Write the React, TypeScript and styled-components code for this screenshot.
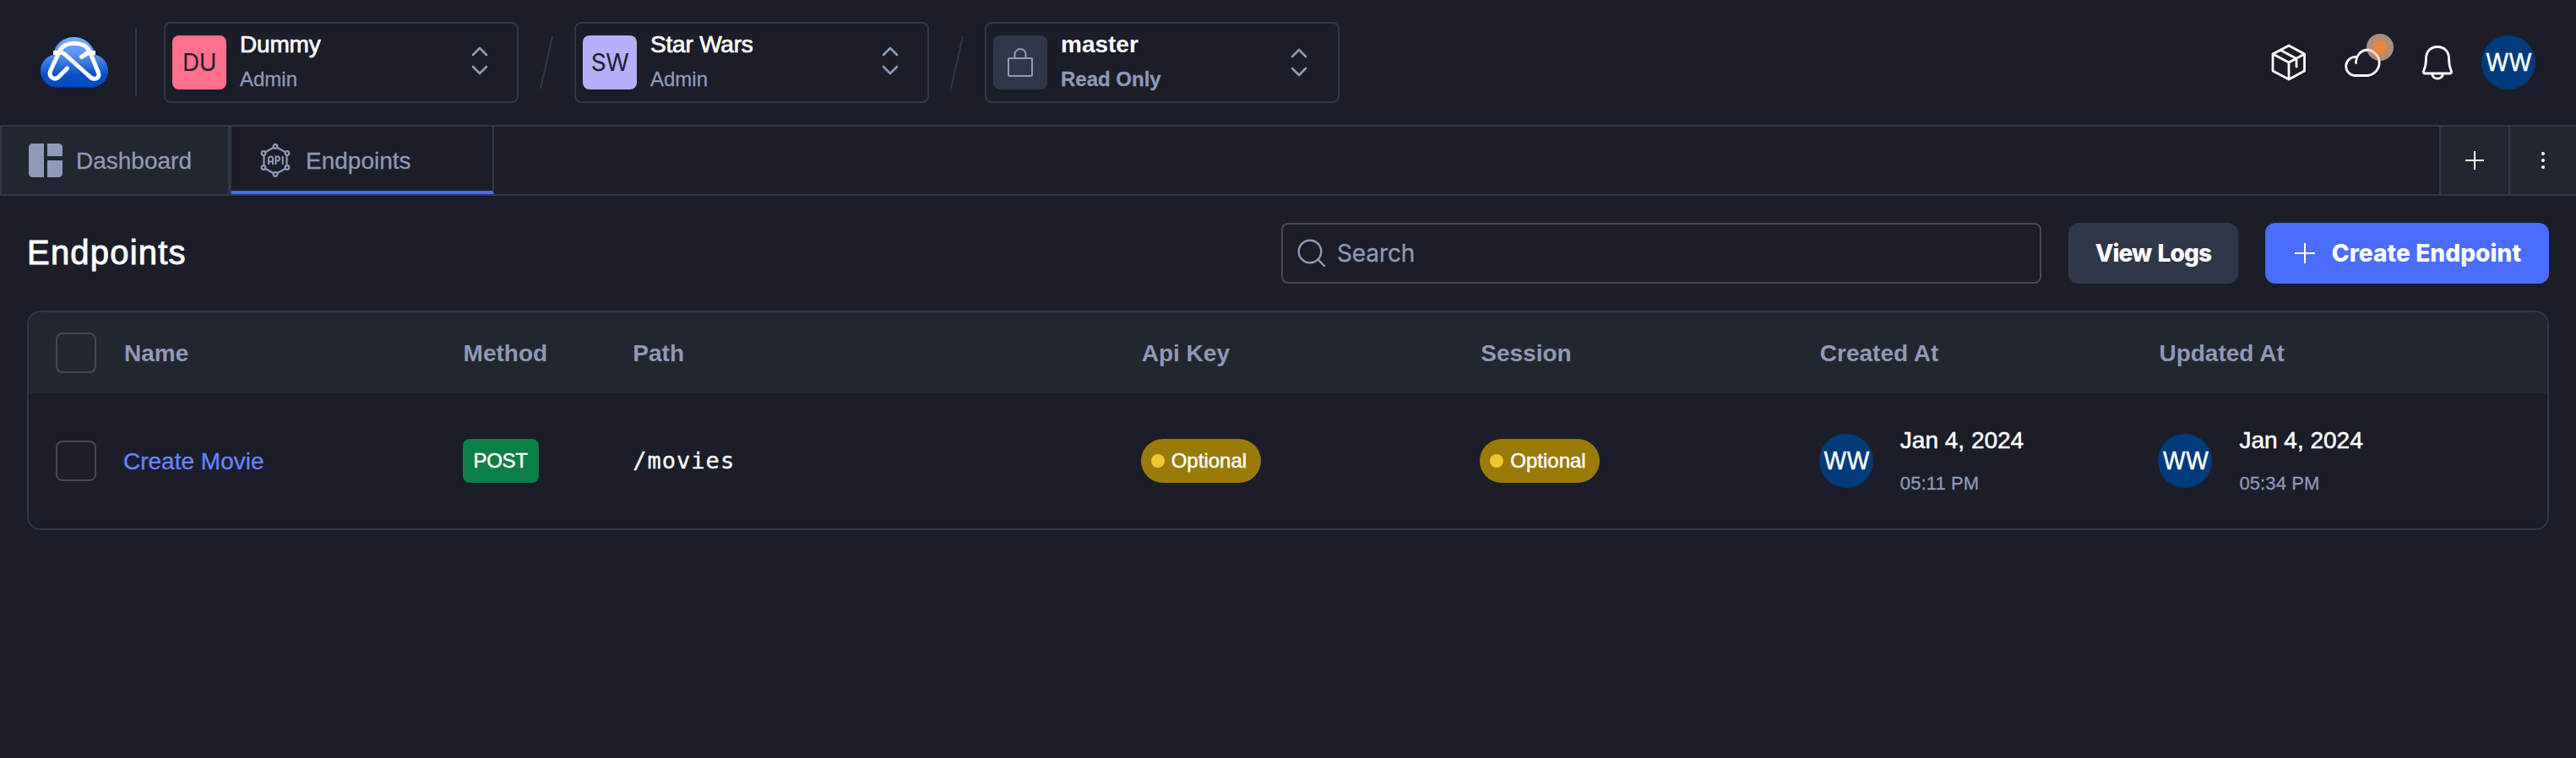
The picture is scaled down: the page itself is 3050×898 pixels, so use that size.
import React from "react";
import styled, { createGlobalStyle } from "styled-components";

const c = {
  bg: "#1b1d29", panel: "#22262f", line: "#31374a", muted: "#8f99b8", white: "#ffffff",
  blue: "#4a6dff", link: "#6684ff", navy: "#003b7c", field: "#48484f",
};
const sans = `"Liberation Sans", Arial, sans-serif`;
const inter = `Inter, "Liberation Sans", sans-serif`;

const Global = createGlobalStyle`
  * { box-sizing: border-box; }
  body { margin: 0; background: ${c.bg}; color: ${c.white}; font-family: ${sans}; }
  svg { display: block; flex: none; }
`;

const Page = styled.div`height: 898px; overflow: hidden; background: ${c.bg};`;
const Header = styled.header`
  height: 150px; display: flex; align-items: center; border-bottom: 2px solid ${c.line}; padding: 0 48px;
`;
const Divider = styled.div`width: 2px; height: 80px; margin: 0 32px; background: ${c.line};`;
const Picker = styled.button`
  width: 420px; height: 96px; flex: none; display: flex; align-items: center; padding: 0 36px 0 8px;
  background: none; border: 2px solid ${c.line}; border-radius: 8px; font: inherit; color: inherit; text-align: left;
`;
const Tile = styled.span<{ $bg: string }>`
  width: 64px; height: 64px; border-radius: 8px; background: ${(p) => p.$bg}; color: ${c.bg};
  display: flex; align-items: center; justify-content: center; font: 400 28px ${inter}; letter-spacing: -0.5px;
`;
const PickerText = styled.span<{ $bold?: boolean }>`
  flex: 1; margin-left: 16px; padding-bottom: 4px; display: flex; flex-direction: column;
  font-weight: ${(p) => (p.$bold ? 700 : 400)};
`;
const PickerTitle = styled.span<{ $bold?: boolean }>`
  font-size: 28px; line-height: 42px; -webkit-text-stroke: ${(p) => (p.$bold ? 0 : 0.7)}px ${c.white};
  letter-spacing: ${(p) => (p.$bold ? 0 : -0.2)}px;
`;
const PickerRole = styled.span`
  font-size: 24px; line-height: 36px; margin-top: 2px; color: ${c.muted}; -webkit-text-stroke: 0.3px ${c.muted};
`;
const Chevrons = styled.svg<{ $low?: boolean }>`
  width: 20px; height: 36px; margin-top: ${(p) => (p.$low ? 0 : -4)}px;
  margin-right: ${(p) => (p.$low ? 0 : -2)}px;
`;
const Slash = styled.svg`width: 16px; height: 66px; margin: 0 25px;`;
const Actions = styled.div`margin-left: auto; display: flex; align-items: center;`;
const ActionIcons = styled.div`display: flex; align-items: center; margin-right: 8px;`;
const ActionIcon = styled.div`position: relative; width: 88px; display: flex; justify-content: center;`;
const Pulse = styled.span`
  position: absolute; top: -17px; right: 8px; width: 32px; height: 32px; border-radius: 50%;
  background: rgba(255, 202, 168, 0.65); display: flex; align-items: center; justify-content: center;
  &::after { content: ""; width: 16px; height: 16px; border-radius: 50%; background: #ef8437; }
`;
const Avatar = styled.span`
  width: 64px; height: 64px; flex: none; border-radius: 50%; background: ${c.navy}; color: ${c.white};
  display: flex; align-items: center; justify-content: center; font: 400 28px ${inter}; letter-spacing: -1px;
  -webkit-text-stroke: 0.4px ${c.white};
`;

const TabBar = styled.nav`height: 82px; display: flex; border-bottom: 2px solid ${c.line}; border-left: 2px solid ${c.line};`;
const Tab = styled.div<{ $w: number; $active?: boolean }>`
  width: ${(p) => p.$w}px; display: flex; align-items: center; gap: 16px; padding-left: 32px; padding-top: ${(p) => (p.$active ? 4 : 0)}px;
  font-size: 28px; line-height: 38px; color: ${c.muted}; -webkit-text-stroke: 0.3px ${c.muted};
  background: ${(p) => (p.$active ? c.bg : c.panel)};
  border-right: ${(p) => (p.$active ? 2 : 4)}px solid ${c.line};
  border-bottom: ${(p) => (p.$active ? 4 : 0)}px solid ${c.blue};
`;
const TabLabel = styled.span`padding-top: 2px;`;
const TabSpace = styled.div`flex: 1;`;
const TabButton = styled.div<{ $w: number }>`
  width: ${(p) => p.$w}px; display: flex; align-items: center; justify-content: center;
  background: ${c.panel}; border-left: 2px solid ${c.line};
`;

const Main = styled.main`padding: 32px;`;
const Toolbar = styled.div`display: flex; align-items: center; gap: 32px; height: 72px; margin-bottom: 32px;`;
const Title = styled.h1`
  flex: 1; margin: 0; font-size: 40px; line-height: 56px; font-weight: 400; letter-spacing: 1.2px;
  -webkit-text-stroke: 0.9px ${c.white}; padding-bottom: 2px;
`;
const Search = styled.div`
  width: 900px; height: 72px; display: flex; align-items: center; gap: 13px; padding-left: 17px;
  border: 2px solid ${c.field}; border-radius: 8px; color: ${c.muted}; font: 400 28px ${inter}; letter-spacing: -0.1px;
  -webkit-text-stroke: 0.3px ${c.muted};
`;
const Button = styled.button<{ $w: number; $primary?: boolean }>`
  width: ${(p) => p.$w}px; height: 72px; display: flex; align-items: center; justify-content: center; gap: 20px;
  padding: 0 0 0 ${(p) => (p.$primary ? 2 : 0)}px;
  border: 0; border-radius: 12px; background: ${(p) => (p.$primary ? c.blue : c.line)}; color: ${c.white};
  font: 800 28px ${inter}; letter-spacing: ${(p) => (p.$primary ? 0.1 : -0.9)}px; word-spacing: ${(p) => (p.$primary ? 0 : 2)}px;
  white-space: nowrap;
`;

const Table = styled.section`border: 2px solid ${c.line}; border-radius: 16px; overflow: hidden;`;
const Row = styled.div<{ $head?: boolean }>`
  height: ${(p) => (p.$head ? 96 : 160)}px; background: ${(p) => (p.$head ? c.panel : c.bg)};
  display: grid; grid-template-columns: 80px 2fr 1fr 3fr 2fr 2fr 2fr 2fr; align-items: center; padding: 0 59px 0 32px;
  font-size: 28px; line-height: 40px; font-weight: ${(p) => (p.$head ? 700 : 400)};
  color: ${(p) => (p.$head ? c.muted : c.white)};
`;
const Check = styled.span`width: 48px; height: 48px; border: 2px solid ${c.field}; border-radius: 8px;`;
const HeadCell = styled.span`padding: 2px 0 0 1px;`;
const Link = styled.a`color: ${c.link}; padding-top: 2px; -webkit-text-stroke: 0.3px ${c.link};`;
const Path = styled.span`
  font-family: "DejaVu Sans Mono", monospace; font-size: 27px; letter-spacing: 1px; padding-left: 1px;
  -webkit-text-stroke: 0.3px ${c.white};
`;
const Method = styled.span`
  width: 90px; height: 52px; border-radius: 8px; background: #0d7f48; font-size: 24px; line-height: 52px; text-align: center;
  letter-spacing: -0.3px; -webkit-text-stroke: 0.5px ${c.white};
`;
const Pill = styled.span`
  width: 142px; height: 52px; border-radius: 26px; background: #9a7a09; display: flex; align-items: center; gap: 8px;
  padding-left: 12px; font-size: 24px; -webkit-text-stroke: 0.5px ${c.white};
  &::before { content: ""; width: 16px; height: 16px; border-radius: 50%; background: #efc732; }
`;
const Stamp = styled.div`display: flex; align-items: center; gap: 32px;`;
const StampText = styled.div`display: flex; flex-direction: column; gap: 8px; padding-top: 4px;`;
const StampDate = styled.span`font-size: 28px; line-height: 42px; -webkit-text-stroke: 0.5px ${c.white};`;
const StampTime = styled.span`
  font-size: 22px; line-height: 44px; color: ${c.muted}; letter-spacing: 0.1px; -webkit-text-stroke: 0.3px ${c.muted};
`;

const Logo = () => (
  <svg width="80" height="60" viewBox="0 0 80 60" fill="none">
    <defs>
      <linearGradient id="cloud" x1="0" y1="0" x2="0" y2="60" gradientUnits="userSpaceOnUse">
        <stop offset="0" stopColor="#79acff" /><stop offset="0.35" stopColor="#5a90f0" />
        <stop offset="0.75" stopColor="#064fc9" /><stop offset="1" stopColor="#004ac6" />
      </linearGradient>
    </defs>
    <path d="M15 21C17 8 27 0 39.500 0S62 8 65 21C74 23 80 31 80 40C80 51 71 59.500 60 59.500H20C9 59.500 0 51 0 40C0 31 6 23 15 21Z" fill="url(#cloud)" />
    <path d="M15 18.500H25Q27 18.500 29 20.500L58 46.500" stroke="#fff" strokeWidth="5" />
    <path d="M65 18.500H58Q55 18.500 53 20" stroke="#fff" strokeWidth="5" />
    <path d="M31.500 37L21 47.500C16 51.500 9.500 47 11.500 40.500L22.500 16.500C28 4 52 4 58 16.500L68.500 42C71 50 62.500 51.500 57.500 46M55 19.500L48.500 23.500" stroke="#fff" strokeWidth="5" strokeLinecap="round" strokeLinejoin="round" />
  </svg>
);
const UpDown = ({ low }: { low?: boolean }) => (
  <Chevrons $low={low} viewBox="0 0 20 36" fill="none" stroke={c.muted} strokeWidth="2.600" strokeLinecap="round" strokeLinejoin="round">
    <path d="M2 11l8-8 8 8M2 25l8 8 8-8" />
  </Chevrons>
);
const Separator = () => (
  <Slash viewBox="0 0 16 66" stroke={c.line} strokeWidth="2"><path d="M1 64L15 2" /></Slash>
);
const Lock = () => (
  <svg width="32" height="36" viewBox="0 0 32 36" fill="none" stroke={c.muted} strokeWidth="2">
    <rect x="2" y="13" width="28" height="21" rx="1" /><path d="M9.500 13V8.500a6.500 6.500 0 0 1 13 0V13" />
  </svg>
);
const Box = () => (
  <svg width="42" height="44" viewBox="0 0 42 44" fill="none" stroke="#fff" strokeWidth="2.800" strokeLinejoin="round" strokeLinecap="round">
    <path d="M21 2L39.500 12V32L21 42L2 32V12ZM2 12L21 22L39.500 12M21 22V42M11.500 7.500L30 17.500V27" />
  </svg>
);
const Cloud = () => (
  <svg width="46" height="34" viewBox="0 0 46 34" fill="none" stroke="#fff" strokeWidth="2.800" strokeLinecap="round">
    <path d="M14.500 17.500C14.500 9 20 2 29 2A16 15.500 0 0 1 29 32.500H12.500A11 11 0 1 1 15 10.500" />
  </svg>
);
const Bell = () => (
  <svg width="38" height="42" viewBox="0 0 38 42" fill="none" stroke="#fff" strokeWidth="2.800" strokeLinejoin="round">
    <path d="M19 2.500C10 2.500 5.500 9 5.500 16C5.500 25 4 28 2.500 31.500Q2 34 4 34H34Q36 34 35.500 31.500C34 28 32.500 25 32.500 16C32.500 9 28 2.500 19 2.500ZM12.500 34.500C13.500 42 24.500 42 25.500 34.500" />
  </svg>
);
const Dashboard = () => (
  <svg width="40" height="40" viewBox="0 0 40 40" fill={c.muted}>
    <path d="M5 0H18V40H5Q0 40 0 35V5Q0 0 5 0ZM22 0H35Q40 0 40 5V15H22ZM22 20H40V35Q40 40 35 40H22Z" />
  </svg>
);
const nodes = [[20, 3.5], [34, 11.5], [34, 28.5], [20, 36.5], [6, 28.5], [6, 11.5]];
const Api = () => (
  <svg width="40" height="40" viewBox="0 0 40 40" fill="none" stroke={c.muted} strokeWidth="2.200">
    <path d="M22.500 5L31.500 10M33.500 14.500V25.500M31.500 30L22.500 35M17.500 35L8.500 30M6.500 25.500V14.500M8.500 10L17.500 5" />
    {nodes.map(([x, y]) => <circle key={`${x}-${y}`} cx={x} cy={y} r="2.300" />)}
    <path strokeWidth="2" d="M12 25V18Q12 15.500 14.500 15.500T17 18V25M12 21.500H17M20.500 25V15.500H23Q25 15.500 25 18T23 20.500H20.500M28.700 15V25" />
  </svg>
);
const Plus = ({ size, w }: { size: number; w: number }) => (
  <svg width={size} height={size} viewBox={`0 0 ${size} ${size}`} stroke="#fff" strokeWidth={w}>
    <path d={`M0 ${size / 2}H${size}M${size / 2} 0V${size}`} />
  </svg>
);
const Dots = () => (
  <svg width="4" height="20" viewBox="0 0 4 20" fill="#fff"><circle cx="2" cy="2" r="2" /><circle cx="2" cy="10" r="2" /><circle cx="2" cy="18" r="2" /></svg>
);
const Glass = () => (
  <svg width="34" height="34" viewBox="0 0 34 34" fill="none" stroke={c.muted} strokeWidth="2.400" strokeLinecap="round">
    <circle cx="15" cy="15" r="13.300" /><path d="M24.500 24.500L32 32" />
  </svg>
);

const When = ({ time }: { time: string }) => (
  <Stamp><Avatar>WW</Avatar><StampText><StampDate>Jan 4, 2024</StampDate><StampTime>{time}</StampTime></StampText></Stamp>
);

const columns = ["Name", "Method", "Path", "Api Key", "Session", "Created At", "Updated At"];

export default function App() {
  return (
    <Page>
      <Global />
      <Header>
        <Logo />
        <Divider />
        <Picker>
          <Tile $bg="#ff708e">DU</Tile>
          <PickerText><PickerTitle>Dummy</PickerTitle><PickerRole>Admin</PickerRole></PickerText>
          <UpDown />
        </Picker>
        <Separator />
        <Picker>
          <Tile $bg="#b6affa">SW</Tile>
          <PickerText><PickerTitle>Star Wars</PickerTitle><PickerRole>Admin</PickerRole></PickerText>
          <UpDown />
        </Picker>
        <Separator />
        <Picker>
          <Tile $bg={c.line}><Lock /></Tile>
          <PickerText $bold><PickerTitle $bold>master</PickerTitle><PickerRole>Read Only</PickerRole></PickerText>
          <UpDown low />
        </Picker>
        <Actions>
          <ActionIcons>
            <ActionIcon><Box /></ActionIcon>
            <ActionIcon><Cloud /><Pulse /></ActionIcon>
            <ActionIcon><Bell /></ActionIcon>
          </ActionIcons>
          <Avatar>WW</Avatar>
        </Actions>
      </Header>
      <TabBar>
        <Tab $w={272}><Dashboard /><TabLabel>Dashboard</TabLabel></Tab>
        <Tab $w={311} $active><Api /><TabLabel>Endpoints</TabLabel></Tab>
        <TabSpace />
        <TabButton $w={82}><Plus size={22} w={2} /></TabButton>
        <TabButton $w={80}><Dots /></TabButton>
      </TabBar>
      <Main>
        <Toolbar>
          <Title>Endpoints</Title>
          <Search><Glass />Search</Search>
          <Button $w={201}>View Logs</Button>
          <Button $w={336} $primary><Plus size={24} w={2} />Create Endpoint</Button>
        </Toolbar>
        <Table>
          <Row $head>
            <Check />
            {columns.map((name) => <HeadCell key={name}>{name}</HeadCell>)}
          </Row>
          <Row>
            <Check />
            <Link>Create Movie</Link>
            <Method>POST</Method>
            <Path>/movies</Path>
            <Pill>Optional</Pill>
            <Pill>Optional</Pill>
            <When time="05:11 PM" />
            <When time="05:34 PM" />
          </Row>
        </Table>
      </Main>
    </Page>
  );
}
